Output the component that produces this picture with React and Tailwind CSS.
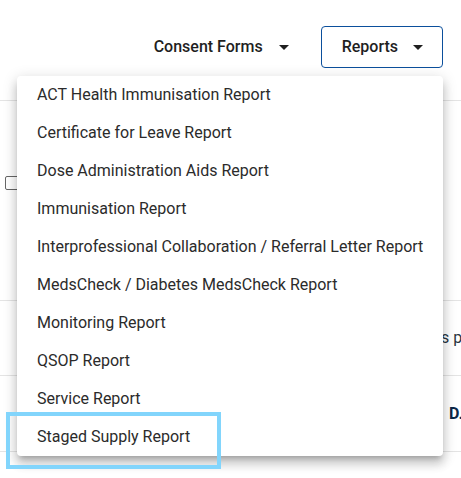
import React from "react";

const reports = [
  "ACT Health Immunisation Report",
  "Certificate for Leave Report",
  "Dose Administration Aids Report",
  "Immunisation Report",
  "Interprofessional Collaboration / Referral Letter Report",
  "MedsCheck / Diabetes MedsCheck Report",
  "Monitoring Report",
  "QSOP Report",
  "Service Report",
  "Staged Supply Report",
];

function Caret() {
  return (
    <svg width="24" height="24" viewBox="0 0 24 24" className="shrink-0">
      <path d="M7 10l5 5 5-5z" fill="#1f1f1f" />
    </svg>
  );
}

export default function App() {
  return (
    <div
      className="relative w-[461px] h-[478px] overflow-hidden bg-white text-[#212121]"
      style={{ fontFamily: "Roboto, 'Noto Sans', sans-serif" }}
    >
      {/* toolbar */}
      <div className="h-[101px] border-b border-[#e4e4e4] flex justify-end items-start pt-[26px] pr-[18px]">
        <button className="h-[42px] flex items-center mr-[25px] text-[16px] font-medium text-[#1f1f1f]">
          <span>Consent Forms</span>
          <span className="ml-[9px]">
            <Caret />
          </span>
        </button>
        <button className="h-[42px] flex items-center border border-[#0b4f9c] rounded-[4px] pl-[20px] pr-[12px] text-[16px] font-medium text-[#1f1f1f]">
          <span>Reports</span>
          <span className="ml-[8px]">
            <Caret />
          </span>
        </button>
      </div>

      {/* table area behind the menu */}
      <div className="h-[200px] border-b border-[#e4e4e4] pl-[5px] pt-[75px]">
        <div className="w-[14px] h-[14px] border-[1.5px] border-[#666] rounded-[2px]" />
      </div>
      <div className="h-[75px] border-b border-[#e4e4e4] flex items-center pl-[410px] whitespace-nowrap text-[16px] text-[#2a3542]">
        Rows per page:
      </div>
      <div className="h-[76px] border-b border-[#e4e4e4] flex items-center pl-[449px] whitespace-nowrap text-[16px] font-bold text-[#0d2747]">
        D…
      </div>

      {/* reports menu */}
      <div className="absolute left-[17px] top-[76px] w-[426px] bg-white rounded-[4px] shadow-[0_5px_5px_-3px_rgba(0,0,0,0.2),0_8px_10px_1px_rgba(0,0,0,0.14),0_3px_14px_2px_rgba(0,0,0,0.12)]">
        {reports.map((r) => (
          <div
            key={r}
            className="h-[38px] flex items-center px-5 text-[16px] text-[#2b2b2b] whitespace-nowrap"
          >
            {r}
          </div>
        ))}
      </div>

      {/* focus highlight */}
      <div className="absolute left-[6px] top-[412px] w-[215px] h-[57px] border-[4px] border-[#82d5fc]" />
    </div>
  );
}
